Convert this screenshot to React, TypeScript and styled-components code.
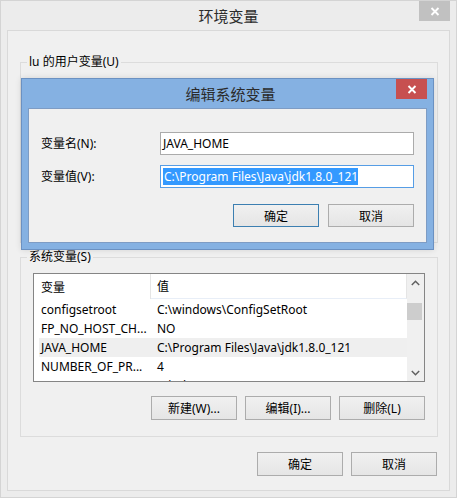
import React from "react";
import styled, { createGlobalStyle } from "styled-components";

const Global = createGlobalStyle`
  html, body { margin: 0; padding: 0; background: #ececec; }
  body {
    font-family: "Noto Sans", "Noto Sans CJK SC", sans-serif;
    font-size: 12px;
    color: #000;
  }
  * { box-sizing: border-box; }
`;

const Window = styled.div`
  position: relative;
  width: 457px;
  height: 498px;
  border: 1px solid #d4d4d4;
  background: #ececec;
  display: flex;
  flex-direction: column;
`;

const TitleBar = styled.div`
  height: 29px;
  display: grid;
  grid-template-columns: 1fr auto 1fr;
  align-items: center;
`;

const TitleText = styled.div<{ $dark?: boolean }>`
  grid-column: 2;
  font-size: 15px;
  line-height: 20px;
  color: #2b2b2b;
  font-family: "Noto Sans CJK SC", sans-serif;
`;

const CloseBtn = styled.div<{ $red?: boolean }>`
  grid-column: 3;
  justify-self: end;
  align-self: start;
  width: 31px;
  height: 20px;
  margin-right: 6px;
  background: ${(p) => (p.$red ? "#c75050" : "#c1c1c1")};
  display: flex;
  align-items: center;
  justify-content: center;
`;

const Panel = styled.div`
  flex: 1;
  margin: 0 6px 6px 6px;
  border: 1px solid #d9d9d9;
  background: #f0f0f0;
  padding: 31px 11px 14px 12px;
  display: flex;
  flex-direction: column;
`;

const GroupBox = styled.div<{ $h: number }>`
  position: relative;
  height: ${(p) => p.$h}px;
  border: 1px solid #dcdcdc;
  display: flex;
  flex-direction: column;
`;

const GroupLabel = styled.div`
  position: absolute;
  top: -9px;
  left: 6px;
  padding: 0 2px 0 2px;
  background: #f0f0f0;
  line-height: 16px;
`;

const SysGroup = styled(GroupBox)`
  margin-top: 14px;
  padding: 15px 12px 16px 12px;
`;

const List = styled.div`
  height: 109px;
  border: 1px solid #858585;
  background: #fff;
  display: flex;
  overflow: hidden;
`;

const ListBody = styled.div`
  flex: 1;
  display: flex;
  flex-direction: column;
  overflow: hidden;
`;

const HeaderRow = styled.div`
  height: 25px;
  display: flex;
  flex: none;
`;

const HeaderCell = styled.div<{ $w?: number }>`
  ${(p) => (p.$w ? `width: ${p.$w}px;` : "flex: 1;")}
  padding-left: ${(p) => (p.$w ? 7 : 6)}px;
  display: flex;
  align-items: center;
  border-right: 1px solid #e5e5e5;
  border-bottom: ${(p) => (p.$w ? "none" : "1px solid #e8eef7")};
`;

const Rows = styled.div`
  padding: 1px 0 0 5px;
  display: flex;
  flex-direction: column;
`;

const Row = styled.div<{ $sel?: boolean }>`
  height: 19px;
  display: flex;
  align-items: center;
  flex: none;
  background: ${(p) => (p.$sel ? "#efefef" : "transparent")};
  white-space: nowrap;
`;

const Cell1 = styled.div`
  width: 112px;
  padding-left: 2px;
`;

const Cell2 = styled.div`
  padding-left: 6px;
`;

const ScrollBar = styled.div`
  width: 17px;
  flex: none;
  background: #f0f0f0;
  display: flex;
  flex-direction: column;
  align-items: center;
`;

const Arrow = styled.div`
  width: 17px;
  height: 17px;
  display: flex;
  align-items: center;
  justify-content: center;
  flex: none;
`;

const Track = styled.div`
  flex: 1;
  width: 100%;
  padding: 12px 2px 0 0;
  display: flex;
  flex-direction: column;
`;

const Thumb = styled.div`
  height: 17px;
  background: #cdcdcd;
`;

const ButtonRow = styled.div<{ $top: number; $right?: number }>`
  display: flex;
  justify-content: flex-end;
  gap: 8px;
  margin-top: ${(p) => p.$top}px;
  padding-right: ${(p) => p.$right ?? 0}px;
`;

const Button = styled.div<{ $def?: boolean; $h?: number }>`
  width: 86px;
  height: ${(p) => p.$h ?? 24}px;
  border: 1px solid ${(p) => (p.$def ? "#3c7fb1" : "#acacac")};
  background: linear-gradient(#f0f0f0, #e5e5e5);
  display: flex;
  align-items: center;
  justify-content: center;
  color: #000;
`;

/* Dialog overlay */
const Dialog = styled.div`
  position: absolute;
  left: 20px;
  top: 77px;
  width: 413px;
  height: 172px;
  border: 1px solid #6b91c2;
  background: #85b1e2;
  padding: 0 6px 6px 6px;
  display: flex;
  flex-direction: column;
  box-shadow: 0 0 6px rgba(0, 0, 0, 0.12);
`;

const DialogTitle = styled(TitleBar)`
  height: 29px;
  margin-right: -6px;
`;

const Client = styled.div`
  flex: 1;
  border: 1px solid #7e9cc4;
  background: #f0f0f0;
  padding: 23px 12px 15px 12px;
  display: grid;
  grid-template-columns: 119px 254px;
  grid-template-rows: 23px 23px auto;
  row-gap: 10px;
  align-items: center;
`;

const FieldLabel = styled.div`
  line-height: 16px;
`;

const Field = styled.div<{ $focus?: boolean }>`
  height: 23px;
  border: 1px solid ${(p) => (p.$focus ? "#569de5" : "#ababab")};
  background: #fff;
  padding: 0 2px;
  display: flex;
  align-items: center;
  white-space: nowrap;
  overflow: hidden;
`;

const Selected = styled.span`
  background: #3399ff;
  color: #fff;
  line-height: 17px;
  padding-left: 1px;
`;

const DialogButtons = styled.div`
  grid-column: 1 / 3;
  display: flex;
  justify-content: flex-end;
  gap: 9px;
  margin-top: 6px;
`;

const XIcon = () => (
  <svg width="10" height="9" viewBox="0 0 10 9">
    <path d="M1.5 1 L8.5 8 M8.5 1 L1.5 8" stroke="#fff" strokeWidth="1.9" fill="none" />
  </svg>
);

const Chevron = ({ up }: { up?: boolean }) => (
  <svg width="9" height="6" viewBox="0 0 9 6">
    <path
      d={up ? "M0.8 5 L4.5 1.3 L8.2 5" : "M0.8 1 L4.5 4.7 L8.2 1"}
      stroke="#606060"
      strokeWidth="1.5"
      fill="none"
    />
  </svg>
);

const rows = [
  ["configsetroot", "C:\\windows\\ConfigSetRoot"],
  ["FP_NO_HOST_CH...", "NO"],
  ["JAVA_HOME", "C:\\Program Files\\Java\\jdk1.8.0_121"],
  ["NUMBER_OF_PR...", "4"],
  ["OS", "Windows_NT"],
];

export default function App() {
  return (
    <>
      <Global />
      <Window>
        <TitleBar>
          <TitleText>环境变量</TitleText>
          <CloseBtn>
            <XIcon />
          </CloseBtn>
        </TitleBar>
        <Panel>
          <GroupBox $h={181}>
            <GroupLabel>lu 的用户变量(U)</GroupLabel>
          </GroupBox>
          <SysGroup $h={180}>
            <GroupLabel>系统变量(S)</GroupLabel>
            <List>
              <ListBody>
                <HeaderRow>
                  <HeaderCell $w={117}>变量</HeaderCell>
                  <HeaderCell>值</HeaderCell>
                </HeaderRow>
                <Rows>
                  {rows.map(([k, v], i) => (
                    <Row key={k} $sel={i === 2}>
                      <Cell1>{k}</Cell1>
                      <Cell2>{v}</Cell2>
                    </Row>
                  ))}
                </Rows>
              </ListBody>
              <ScrollBar>
                <Arrow>
                  <Chevron up />
                </Arrow>
                <Track>
                  <Thumb />
                </Track>
                <Arrow>
                  <Chevron />
                </Arrow>
              </ScrollBar>
            </List>
            <ButtonRow $top={14}>
              <Button>新建(W)...</Button>
              <Button>编辑(I)...</Button>
              <Button>删除(L)</Button>
            </ButtonRow>
          </SysGroup>
          <ButtonRow $top={15} $right={1}>
            <Button>确定</Button>
            <Button>取消</Button>
          </ButtonRow>
        </Panel>

        <Dialog>
          <DialogTitle>
            <TitleText>编辑系统变量</TitleText>
            <CloseBtn $red>
              <XIcon />
            </CloseBtn>
          </DialogTitle>
          <Client>
            <FieldLabel>变量名(N):</FieldLabel>
            <Field>JAVA_HOME</Field>
            <FieldLabel>变量值(V):</FieldLabel>
            <Field $focus>
              <Selected>C:\Program Files\Java\jdk1.8.0_121</Selected>
            </Field>
            <DialogButtons>
              <Button $def $h={23}>确定</Button>
              <Button $h={23}>取消</Button>
            </DialogButtons>
          </Client>
        </Dialog>
      </Window>
    </>
  );
}
